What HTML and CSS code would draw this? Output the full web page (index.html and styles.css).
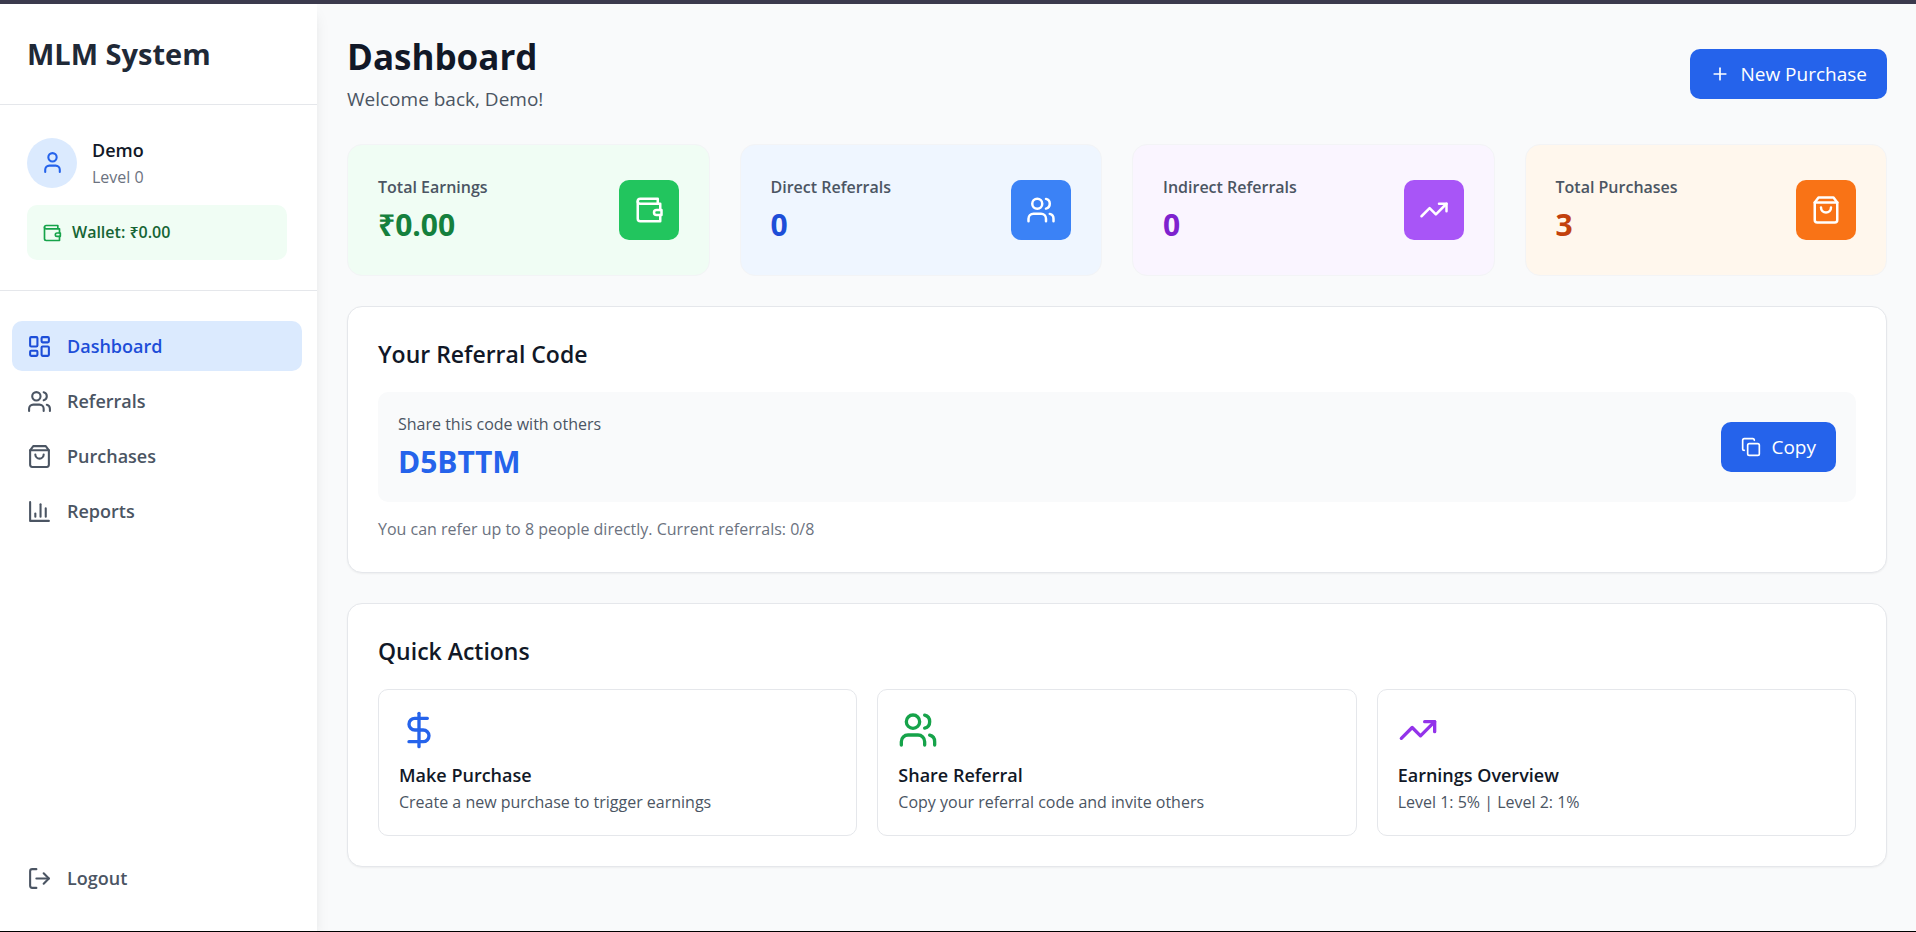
FILE: index.html
```html
<!DOCTYPE html>
<html lang="en">
<head>
<meta charset="utf-8">
<meta name="viewport" content="width=device-width, initial-scale=1">
<title>MLM System - Dashboard</title>
<link rel="stylesheet" href="styles.css">
</head>
<body>
<svg class="sprite" aria-hidden="true">
  <symbol id="i-user" viewBox="0 0 24 24"><path d="M19 21v-2a4 4 0 0 0-4-4H9a4 4 0 0 0-4 4v2"/><circle cx="12" cy="7" r="4"/></symbol>
  <symbol id="i-wallet" viewBox="0 0 24 24"><path d="M21 12V7H5a2 2 0 0 1 0-4h14v4"/><path d="M3 5v14a2 2 0 0 0 2 2h16v-5"/><path d="M18 12a2 2 0 0 0 0 4h4v-4Z"/></symbol>
  <symbol id="i-grid" viewBox="0 0 24 24"><rect width="7" height="9" x="3" y="3" rx="1"/><rect width="7" height="5" x="14" y="3" rx="1"/><rect width="7" height="9" x="14" y="12" rx="1"/><rect width="7" height="5" x="3" y="16" rx="1"/></symbol>
  <symbol id="i-users" viewBox="0 0 24 24"><path d="M16 21v-2a4 4 0 0 0-4-4H6a4 4 0 0 0-4 4v2"/><circle cx="9" cy="7" r="4"/><path d="M22 21v-2a4 4 0 0 0-3-3.87"/><path d="M16 3.13a4 4 0 0 1 0 7.75"/></symbol>
  <symbol id="i-bag" viewBox="0 0 24 24"><path d="M6 2 3 6v14a2 2 0 0 0 2 2h14a2 2 0 0 0 2-2V6l-3-4Z"/><path d="M3 6h18"/><path d="M16 10a4 4 0 0 1-8 0"/></symbol>
  <symbol id="i-chart" viewBox="0 0 24 24"><path d="M3 3v18h18"/><path d="M18 17V9"/><path d="M13 17V5"/><path d="M8 17v-3"/></symbol>
  <symbol id="i-logout" viewBox="0 0 24 24"><path d="M9 21H5a2 2 0 0 1-2-2V5a2 2 0 0 1 2-2h4"/><path d="m16 17 5-5-5-5"/><path d="M21 12H9"/></symbol>
  <symbol id="i-plus" viewBox="0 0 24 24"><path d="M5 12h14"/><path d="M12 5v14"/></symbol>
  <symbol id="i-trend" viewBox="0 0 24 24"><path d="m22 7-8.500 8.500-5-5L2 17"/><path d="M16 7h6v6"/></symbol>
  <symbol id="i-copy" viewBox="0 0 24 24"><rect width="14" height="14" x="8" y="8" rx="2"/><path d="M4 16c-1.100 0-2-.9-2-2V4c0-1.100.9-2 2-2h10c1.100 0 2 .9 2 2"/></symbol>
  <symbol id="i-dollar" viewBox="0 0 24 24"><path d="M12 2v20"/><path d="M17 5H9.500a3.500 3.500 0 0 0 0 7h5a3.500 3.500 0 0 1 0 7H6"/></symbol>
</svg>
<div class="app">
  <aside class="sidebar">
    <div class="brand">MLM System</div>
    <section class="profile">
      <div class="person">
        <span class="avatar"><svg class="icon"><use href="#i-user"/></svg></span>
        <div>
          <p class="person-name">Demo</p>
          <p class="person-level">Level 0</p>
        </div>
      </div>
      <div class="wallet"><svg class="icon icon-sm"><use href="#i-wallet"/></svg><span class="wallet-text">Wallet: ₹0.00</span></div>
    </section>
    <nav class="nav">
      <a class="nav-item active" href="#" aria-current="page"><svg class="icon"><use href="#i-grid"/></svg>Dashboard</a>
      <a class="nav-item" href="#"><svg class="icon"><use href="#i-users"/></svg>Referrals</a>
      <a class="nav-item" href="#"><svg class="icon"><use href="#i-bag"/></svg>Purchases</a>
      <a class="nav-item" href="#"><svg class="icon"><use href="#i-chart"/></svg>Reports</a>
    </nav>
    <div class="sidebar-foot">
      <button class="nav-item" type="button"><svg class="icon"><use href="#i-logout"/></svg>Logout</button>
    </div>
  </aside>
  <main class="main">
    <header class="page-head">
      <div>
        <h1>Dashboard</h1>
        <p class="welcome">Welcome back, Demo!</p>
      </div>
      <button class="btn" type="button"><svg class="icon icon-sm"><use href="#i-plus"/></svg>New Purchase</button>
    </header>
    <section class="stats">
      <article class="stat green">
        <div><p class="stat-label">Total Earnings</p><p class="stat-value">₹0.00</p></div>
        <span class="tile"><svg class="icon icon-md"><use href="#i-wallet"/></svg></span>
      </article>
      <article class="stat blue">
        <div><p class="stat-label">Direct Referrals</p><p class="stat-value">0</p></div>
        <span class="tile"><svg class="icon icon-md"><use href="#i-users"/></svg></span>
      </article>
      <article class="stat purple">
        <div><p class="stat-label">Indirect Referrals</p><p class="stat-value">0</p></div>
        <span class="tile"><svg class="icon icon-md"><use href="#i-trend"/></svg></span>
      </article>
      <article class="stat orange">
        <div><p class="stat-label">Total Purchases</p><p class="stat-value">3</p></div>
        <span class="tile"><svg class="icon icon-md"><use href="#i-bag"/></svg></span>
      </article>
    </section>
    <section class="card">
      <h2>Your Referral Code</h2>
      <div class="code-box">
        <div><p class="small">Share this code with others</p><p class="code">D5BTTM</p></div>
        <button class="btn" type="button"><svg class="icon icon-sm"><use href="#i-copy"/></svg>Copy</button>
      </div>
      <p class="small limit">You can refer up to 8 people directly. Current referrals: 0/8</p>
    </section>
    <section class="card">
      <h2>Quick Actions</h2>
      <div class="actions">
        <button class="action" type="button"><svg class="icon icon-lg c-blue"><use href="#i-dollar"/></svg><span class="action-title">Make Purchase</span><span class="small">Create a new purchase to trigger earnings</span></button>
        <button class="action" type="button"><svg class="icon icon-lg c-green"><use href="#i-users"/></svg><span class="action-title">Share Referral</span><span class="small">Copy your referral code and invite others</span></button>
        <div class="action"><svg class="icon icon-lg c-purple"><use href="#i-trend"/></svg><span class="action-title">Earnings Overview</span><span class="small">Level 1: 5% | Level 2: 1%</span></div>
      </div>
    </section>
  </main>
</div>
</body>
</html>
```
FILE: styles.css
```css
*, *::before, *::after { box-sizing: border-box; }
body {
  margin: 0;
  min-height: 100vh;
  display: flex;
  flex-direction: column;
  border-top: 4px solid #3b3a4d;
  border-bottom: 1px solid #000;
  background: #f9fafb;
  color: #111827;
  font: 400 19px/30px "Open Sans", "Noto Sans", sans-serif;
}
h1, h2, p { margin: 0; }
button { font: inherit; color: inherit; border: 0; background: none; padding: 0; cursor: pointer; }
a { color: inherit; text-decoration: none; }
.sprite { display: none; }
.icon {
  flex: none;
  width: 25px;
  height: 25px;
  fill: none;
  stroke: currentColor;
  stroke-width: 2;
  stroke-linecap: round;
  stroke-linejoin: round;
}
.icon-sm { width: 20px; height: 20px; }
.icon-md { width: 30px; height: 30px; }
.icon-lg { width: 40px; height: 40px; }

.app { flex: 1; display: flex; }

.sidebar {
  flex: none;
  width: 317px;
  display: flex;
  flex-direction: column;
  background: #fff;
  box-shadow: 0 10px 15px -3px rgba(0, 0, 0, .1), 0 4px 6px -4px rgba(0, 0, 0, .1);
}
.brand {
  padding: 30px 27px;
  border-bottom: 1px solid #e5e7eb;
  color: #1f2937;
  font-size: 29px;
  line-height: 40px;
  font-weight: 700;
}
.profile {
  padding: 30px 30px 30px 27px;
  border-bottom: 1px solid #e5e7eb;
}
.person { display: flex; align-items: center; gap: 15px; }
.avatar {
  width: 50px;
  height: 50px;
  display: grid;
  place-items: center;
  border-radius: 50%;
  background: #dbeafe;
  color: #2563eb;
}
.person-name { font-size: 18px; font-weight: 600; }
.person-level { font-size: 16px; line-height: 25px; color: #6b7280; }
.wallet {
  display: flex;
  align-items: center;
  gap: 10px;
  margin-top: 15px;
  padding: 15px;
  border-radius: 10px;
  background: #f0fdf4;
  color: #16a34a;
  font-size: 16px;
  line-height: 25px;
  font-weight: 600;
}
.wallet-text { color: #166534; }
.nav { display: grid; gap: 5px; padding: 30px 15px 30px 12px; }
.nav-item {
  display: flex;
  align-items: center;
  gap: 15px;
  width: 100%;
  padding: 10px 15px;
  border-radius: 10px;
  color: #4b5563;
  font-size: 18px;
  font-weight: 600;
  text-align: left;
}
.nav-item.active { background: #dbeafe; color: #1d4ed8; }
.sidebar-foot { margin-top: auto; padding: 30px 15px 28px 12px; }

.main {
  flex: 1;
  min-width: 0;
  display: flex;
  flex-direction: column;
  gap: 30px;
  padding: 30px;
  padding-right: 29px;
}
.page-head { display: flex; align-items: center; justify-content: space-between; }
h1 { font-size: 35px; line-height: 45px; font-weight: 700; }
.welcome { margin-top: 5px; color: #4b5563; }
.btn {
  display: flex;
  align-items: center;
  gap: 10px;
  padding: 10px 20px;
  border-radius: 10px;
  background: #2563eb;
  color: #fff;
}
.stats { display: grid; grid-template-columns: repeat(4, 1fr); gap: 30px; }
.stat {
  display: flex;
  align-items: center;
  justify-content: space-between;
  padding: 30px;
  border: 1px solid #f3f4f6;
  border-radius: 15px;
}
.stat-label { margin-bottom: 5px; font-size: 16px; line-height: 25px; font-weight: 600; color: #4b5563; }
.stat-value { font-size: 30px; line-height: 40px; font-weight: 700; }
.tile {
  width: 60px;
  height: 60px;
  display: grid;
  place-items: center;
  border-radius: 10px;
  color: #fff;
}
.green { background: #f0fdf4; }
.green .tile { background: #22c55e; }
.green .stat-value { color: #15803d; }
.blue { background: #eff6ff; }
.blue .tile { background: #3b82f6; }
.blue .stat-value { color: #1d4ed8; }
.purple { background: #faf5ff; }
.purple .tile { background: #a855f7; }
.purple .stat-value { color: #7e22ce; }
.orange { background: #fff7ed; }
.orange .tile { background: #f97316; }
.orange .stat-value { color: #c2410c; }

.card {
  padding: 30px;
  border: 1px solid #e5e7eb;
  border-radius: 15px;
  background: #fff;
  box-shadow: 0 1px 2px rgba(0, 0, 0, .05);
}
h2 { margin-bottom: 20px; font-size: 23px; line-height: 35px; font-weight: 600; }
.small { font-size: 16px; line-height: 25px; color: #4b5563; }
.code-box {
  display: flex;
  align-items: center;
  justify-content: space-between;
  padding: 20px;
  border-radius: 10px;
  background: #f9fafb;
}
.code { margin-top: 5px; font-size: 30px; line-height: 40px; font-weight: 700; color: #2563eb; }
.limit { margin-top: 15px; color: #6b7280; }
.actions { display: grid; grid-template-columns: repeat(3, 1fr); gap: 20px; }
.action {
  display: flex;
  flex-direction: column;
  align-items: flex-start;
  padding: 20px;
  border: 1px solid #e5e7eb;
  border-radius: 10px;
  text-align: left;
}
.action-title { margin-top: 10px; font-size: 18px; font-weight: 600; }
.c-blue { color: #2563eb; }
.c-green { color: #16a34a; }
.c-purple { color: #9333ea; }
```
